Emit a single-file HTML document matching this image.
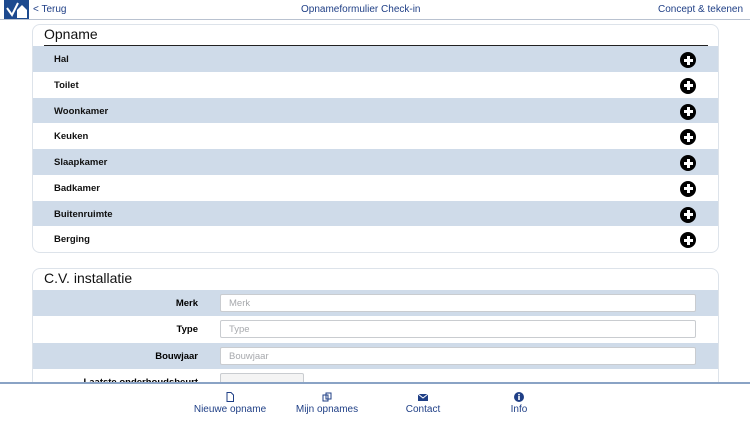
<!DOCTYPE html>
<html><head><meta charset="utf-8"><style>
*{margin:0;padding:0;box-sizing:border-box}
body{width:750px;height:422px;overflow:hidden;background:#fff;font-family:"Liberation Sans",Arial,sans-serif;position:relative}
.top{position:absolute;left:0;top:0;width:750px;height:20px;border-bottom:1px solid #b9c2d0;background:#fff}
.logo{position:absolute;left:4px;top:0;width:25px;height:19px;background:#1d4a8f}
.top span{position:absolute;top:4px;font-size:10px;color:#1f3f86}
.card{position:absolute;left:32px;width:687px;border:1px solid #dde3ea;border-radius:8px;overflow:hidden;background:#fff}
.card h2{font-weight:normal;font-size:14px;color:#111;height:21px;padding:1px 0 0 11px}
.row{position:relative;height:25.75px;font-size:9.5px;font-weight:bold;color:#111;line-height:27.5px;padding-left:21px}
.b{background:#cfdbe9}
.plus{position:absolute;left:647px;top:6px;width:16px;height:16px;border-radius:50%;background:#000}
.plus:before{content:"";position:absolute;left:3.5px;top:6.5px;width:9px;height:3px;background:#fff}
.plus:after{content:"";position:absolute;left:6.5px;top:3.5px;width:3px;height:9px;background:#fff}
.f{position:relative;height:26.3px;font-size:9.5px;font-weight:bold}
.f label{position:absolute;right:520px;top:8px}
.f .in{position:absolute;left:187px;top:4px;width:476px;height:18px;border:1px solid #c9ccd0;border-radius:2px;background:#fff;font-weight:normal;color:#a7a9ad;font-size:9.5px;padding:3px 8px}
.bot{position:absolute;left:0;top:382px;width:750px;height:40px;background:#fff;border-top:2px solid #8aa3c5}
.it{position:absolute;top:20px;font-size:10px;color:#1f3f86;text-align:center;width:90px;margin-left:-45px}
.ic{position:absolute;top:8px;width:10px;height:10px;margin-left:-5px}
</style></head><body>
<div class="top">
<div class="logo"><svg width="25" height="19"><path d="M3 8 L8 15 L14 3" stroke="#fff" stroke-width="2" fill="none"/><path d="M13 10 L18 5 L23 10 L23 18 L13 18Z" fill="#fff"/></svg></div>
<span style="left:33px">&lt; Terug</span>
<span style="left:301px">Opnameformulier Check-in</span>
<span style="left:658px">Concept &amp; tekenen</span>
</div>
<div class="card" style="top:24px;height:229px">
<h2>Opname</h2>
<div style="position:absolute;left:11px;top:20px;width:664px;height:1.5px;background:#222"></div>
<div class="row b">Hal<i class="plus"></i></div>
<div class="row">Toilet<i class="plus"></i></div>
<div class="row b">Woonkamer<i class="plus"></i></div>
<div class="row">Keuken<i class="plus"></i></div>
<div class="row b">Slaapkamer<i class="plus"></i></div>
<div class="row">Badkamer<i class="plus"></i></div>
<div class="row b">Buitenruimte<i class="plus"></i></div>
<div class="row">Berging<i class="plus"></i></div>
</div>
<div class="card" style="top:268px;height:130px">
<h2>C.V. installatie</h2>
<div class="f b"><label>Merk</label><div class="in">Merk</div></div>
<div class="f"><label>Type</label><div class="in">Type</div></div>
<div class="f b"><label>Bouwjaar</label><div class="in">Bouwjaar</div></div>
<div class="f"><label>Laatste onderhoudsbeurt</label><div class="in" style="width:84px;background:#f4f4f4"></div></div>
</div>
<div class="bot">
<svg class="ic" style="left:230px" viewBox="0 0 10 10"><path d="M2 .5h4l2.5 2.5v6.5h-6.5z" fill="none" stroke="#1f3f86"/></svg>
<svg class="ic" style="left:327px" viewBox="0 0 10 10"><rect x="1" y="3" width="5" height="6" fill="none" stroke="#1f3f86"/><rect x="4" y="1" width="5" height="6" fill="none" stroke="#1f3f86"/></svg>
<svg class="ic" style="left:423px" viewBox="0 0 10 10"><rect x="0" y="2" width="10" height="7" fill="#1f3f86"/><path d="M0 2l5 4 5-4" stroke="#fff" fill="none"/></svg>
<svg class="ic" style="left:519px" viewBox="0 0 10 10"><circle cx="5" cy="5" r="5" fill="#1f3f86"/><rect x="4.2" y="4" width="1.6" height="4" fill="#fff"/><circle cx="5" cy="2.6" r=".9" fill="#fff"/></svg>
<div class="it" style="left:230px">Nieuwe opname</div>
<div class="it" style="left:327px">Mijn opnames</div>
<div class="it" style="left:423px">Contact</div>
<div class="it" style="left:519px">Info</div>
</div>
</body></html>
